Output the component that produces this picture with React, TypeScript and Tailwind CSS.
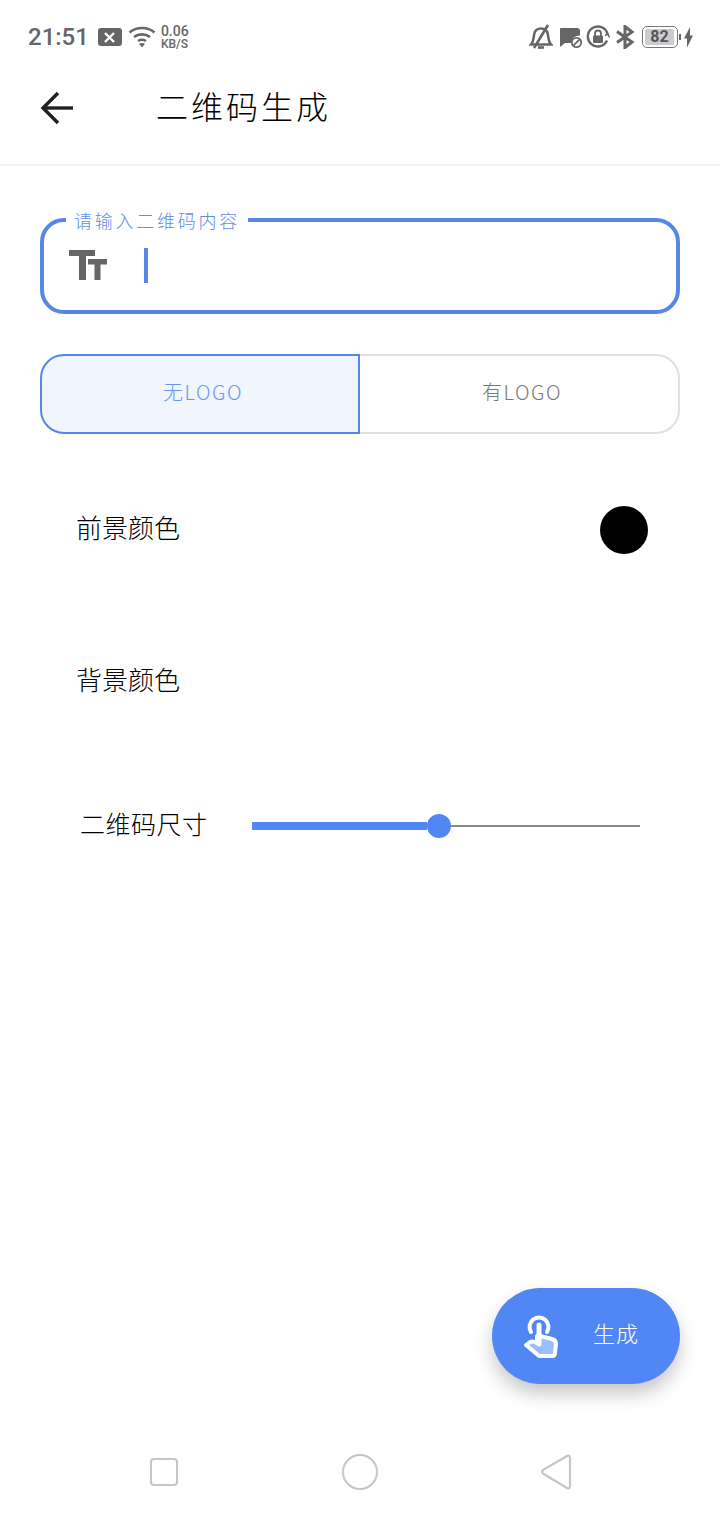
import React from "react";

const hand = "font-['Noto_Sans_CJK_SC','Noto_Sans',sans-serif] font-light";

function Wifi() {
  return (
    <svg width="28" height="24" viewBox="0 0 28 24" fill="none" stroke="#666" strokeWidth="2.6">
      <path d="M1.500 7.500C8.500 1.500 19.500 1.500 26.500 7.500" />
      <path d="M6 12C10.500 8.500 17.500 8.500 22 12" />
      <path d="M10 16C12.500 14.500 15.500 14.500 18 16" />
      <path d="M14 22.500L11 18.700C13 17.800 15 17.800 17 18.700Z" fill="#666" stroke="none" />
    </svg>
  );
}

function StatusRight() {
  return (
    <div className="flex items-center">
      <svg width="24" height="26" viewBox="0 0 24 26" fill="none" stroke="#666" strokeWidth="2.6" className="mr-[5px]">
        <path d="M2 20.500H22C19 17 19.500 14 18.800 10C18 6 15 4.500 12 4.500C9 4.500 6 6 5.200 10C4.500 14 5 17 2 20.500Z" />
        <path d="M9 23.500H15" />
        <path d="M19 1L5 24" />
      </svg>
      <svg width="24" height="24" viewBox="0 0 24 24" className="mr-[4px]">
        <path d="M3 3H19C21 3 22 4 22 6V10.500C17 10.500 13.500 13.500 13 18H7L2 22V4C2 3.500 2.500 3 3 3Z" fill="#666" />
        <circle cx="18.500" cy="17.500" r="4.700" fill="none" stroke="#666" strokeWidth="1.800" />
        <path d="M15.300 20.700L21.700 14.300" stroke="#666" strokeWidth="1.800" />
      </svg>
      <svg width="24" height="24" viewBox="0 0 24 24" fill="none" className="mr-[5px]">
        <path d="M21 15.500A10 10 0 1 1 21.500 9" stroke="#666" strokeWidth="2.400" />
        <path d="M19 10.500L22 9L23.500 12.500" stroke="#666" strokeWidth="1.500" />
        <rect x="7" y="10.500" width="10" height="7.500" rx="1" fill="#666" />
        <path d="M9 11V8.500A3 3 0 0 1 15 8.500V11" stroke="#666" strokeWidth="1.800" />
      </svg>
      <svg width="20" height="24" viewBox="0 0 20 24" fill="none" stroke="#666" strokeWidth="3" className="mr-[7px]">
        <path d="M2 6.500L17 17L10 22.500V1.500L17 7L2 17.500" />
      </svg>
      <div className="relative flex h-[22px] w-[36px] items-center rounded-[5px] border border-[#777] p-[2px]">
        <div className="flex h-full w-[29px] items-center justify-center rounded-[2px] bg-[#ccc] font-['Roboto',sans-serif] text-[16px] leading-none font-bold text-[#555]">
          82
        </div>
      </div>
      <div className="ml-[1px] h-[6px] w-[2px] bg-[#666]" />
      <svg width="10" height="24" viewBox="0 0 10 24" fill="#666" className="ml-[2px]">
        <path d="M7 2V10.500H10L4 22.500V13.500H1Z" />
      </svg>
    </div>
  );
}

function Segment({ active, children }: { active?: boolean; children: React.ReactNode }) {
  return (
    <div
      className={
        active
          ? `flex h-full w-[320px] items-center justify-center rounded-l-[24px] border-2 border-[#5686e6] bg-[#f0f5fe] pb-[4px] pl-[6px] tracking-[1.500px] text-[#6d97ec] ${hand} text-[20px]`
          : `flex h-full w-[320px] items-center justify-center rounded-r-[24px] border-2 border-l-0 border-[#e0e0e0] bg-white pb-[4px] pl-[6px] tracking-[1.500px] text-[#777] ${hand} text-[20px]`
      }
    >
      {children}
    </div>
  );
}

export default function App() {
  return (
    <div className="flex h-[1520px] w-[720px] flex-col overflow-hidden bg-white">
      <div className="flex h-[74px] items-center justify-between pr-[27px] pl-[28px]">
        <div className="flex items-center">
          <span className="font-['Roboto',sans-serif] text-[24px] leading-none font-medium text-[#666]">21:51</span>
          <div className="ml-[9px] flex h-[18px] w-[24px] items-center justify-center rounded-[3px] bg-[#666]">
            <svg width="11" height="11" viewBox="0 0 11 11" stroke="#fff" strokeWidth="2.400">
              <path d="M1 1L10 10M10 1L1 10" />
            </svg>
          </div>
          <div className="ml-[6px]"><Wifi /></div>
          <div className="ml-[5px] flex flex-col font-['Roboto',sans-serif] text-[#666]">
            <span className="text-[14px] leading-[13px] font-medium">0.06</span>
            <span className="text-[12px] leading-[12px] font-medium">KB/S</span>
          </div>
        </div>
        <StatusRight />
      </div>

      <div className="flex h-[92px] items-center border-b-2 border-[#f3f3f3] pb-[22px] pl-[40px]">
        <svg width="34" height="34" viewBox="0 0 34 34" fill="none" stroke="#212121" strokeWidth="3.400">
          <path d="M33 17H3" />
          <path d="M18 2L3 17L18 32" />
        </svg>
        <span className={`ml-[82px] pb-[6px] text-[32px] leading-none tracking-[3px] text-black ${hand}`}>二维码生成</span>
      </div>

      <div className="relative mx-[40px] mt-[52px] flex h-[96px] items-start rounded-[24px] border-4 border-[#5686e6] pt-[26px] pl-[25px]">
        <div className={`absolute top-[-13px] left-[22px] bg-white px-[8px] text-[18px] leading-[22px] tracking-[2.750px] text-[#5f8cea] ${hand}`}>
          请输入二维码内容
        </div>
        <svg width="40" height="32" viewBox="0 0 40 32" fill="#666">
          <path d="M0 2H26V8H17V32H10V8H0Z" />
          <path d="M19 11H38V16.500H31.500V32H25.500V16.500H19Z" />
        </svg>
        <div className="ml-[35px] h-[35px] w-[4px] bg-[#5686e6]" />
      </div>

      <div className="mx-[40px] mt-[40px] flex h-[80px]">
        <Segment active>无LOGO</Segment>
        <Segment>有LOGO</Segment>
      </div>

      <div className="mt-[72px] flex h-[48px] items-center justify-between pr-[72px] pl-[76px]">
        <span className={`pb-[6px] text-[26px] leading-none text-black ${hand}`}>前景颜色</span>
        <div className="h-[48px] w-[48px] rounded-full bg-black" />
      </div>

      <div className="mt-[104px] flex h-[48px] items-center pl-[76px]">
        <span className={`pb-[6px] text-[26px] leading-none text-black ${hand}`}>背景颜色</span>
      </div>

      <div className="mt-[108px] flex h-[24px] items-center pr-[80px] pl-[80px]">
        <span className={`w-[172px] pb-[5px] text-[25px] leading-none tracking-[0.500px] text-black ${hand}`}>二维码尺寸</span>
        <div className="flex flex-1 items-center">
          <div className="h-[8px] w-[175px] bg-[#5087f5]" />
          <div className="h-[24px] w-[24px] rounded-full bg-[#5087f5]" />
          <div className="h-[2px] flex-1 bg-[#8a8a8a]" />
        </div>
      </div>

      <div className="mt-auto flex justify-end pr-[40px]">
        <div className="flex h-[96px] w-[188px] items-center rounded-[48px] bg-[#5087f5] pl-[30px] shadow-[0_10px_18px_rgba(0,0,0,0.22)]">
          <svg width="36" height="44" viewBox="0 0 36 44" fill="none" strokeLinecap="round" strokeLinejoin="round">
            <path d="M18 22L30 25C33 26 34 28 34 30L33 39C33 41 32 42 30 42H17L4 31L8 28C10 27 12 27 15 29V22Z" fill="#9dbdf9" stroke="#fff" strokeWidth="4" />
            <path d="M17 30V11" stroke="#fff" strokeWidth="5" />
            <path d="M9 18A9.500 9.500 0 1 1 25 18" stroke="#fff" strokeWidth="4" />
          </svg>
          <span className={`ml-[35px] pb-[8px] text-[22px] leading-none tracking-[1px] text-white ${hand}`}>生成</span>
        </div>
      </div>

      <div className="mt-[68px] mb-[28px] flex h-[40px] items-center pl-[150px]">
        <div className="h-[28px] w-[28px] rounded-[4px] border-2 border-[#c6c6c6]" />
        <div className="ml-[164px] h-[36px] w-[36px] rounded-full border-2 border-[#c6c6c6]" />
        <svg width="32" height="36" viewBox="0 0 32 36" fill="none" stroke="#c6c6c6" strokeWidth="2.200" className="ml-[162px]">
          <path d="M27 2L3 16C2 17 2 18.500 3 19.500L27 34C29 35 30 34 30 32V4C30 2 29 1 27 2Z" strokeLinejoin="round" />
        </svg>
      </div>
    </div>
  );
}
